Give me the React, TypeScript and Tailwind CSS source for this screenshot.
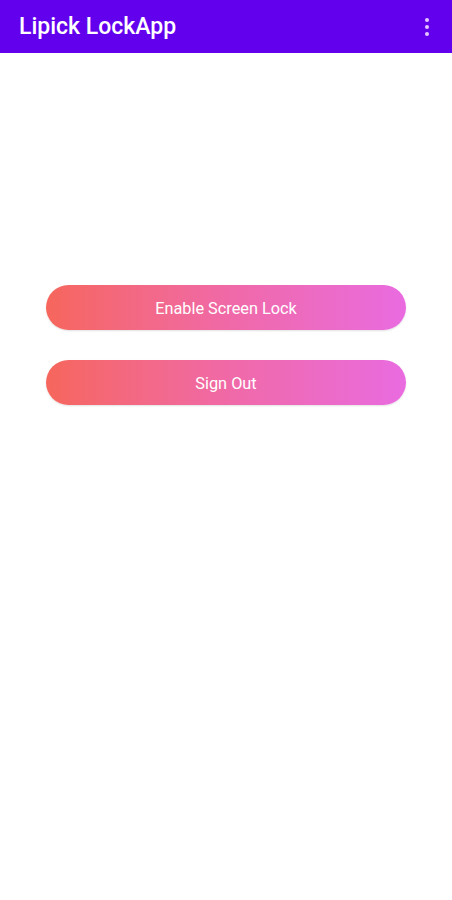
import React from 'react';

export default function App() {
    return (
        <main className="min-h-screen w-full bg-white font-['Roboto','Liberation_Sans',sans-serif]">
            {/* App bar */}
            <header className="h-[53px] bg-[#6200ee] flex items-center justify-between pl-[19px] pr-[23px]">
                <h1 className="text-[23px] font-medium text-white leading-none mb-[1px]">Lipick LockApp</h1>
                <div className="flex flex-col items-center gap-[3px]">
                    <span className="w-[4px] h-[4px] rounded-full bg-[#e6c6ff]" />
                    <span className="w-[4px] h-[4px] rounded-full bg-[#e6c6ff]" />
                    <span className="w-[4px] h-[4px] rounded-full bg-[#e6c6ff]" />
                </div>
            </header>

            <div className="flex flex-col items-center gap-[30px] pt-[232px]">
                <button className="w-[360px] h-[45px] pt-[3px] rounded-full bg-gradient-to-r from-[#f6665c] via-[#f069a6] to-[#e96be0] text-white text-[16.3px] leading-none shadow-[0_1px_2px_rgba(0,0,0,0.12)]">
                    Enable Screen Lock
                </button>
                <button className="w-[360px] h-[45px] pt-[3px] rounded-full bg-gradient-to-r from-[#f6665c] via-[#f069a6] to-[#e96be0] text-white text-[16.3px] leading-none shadow-[0_1px_2px_rgba(0,0,0,0.12)]">
                    Sign Out
                </button>
            </div>
        </main>
    );
}
